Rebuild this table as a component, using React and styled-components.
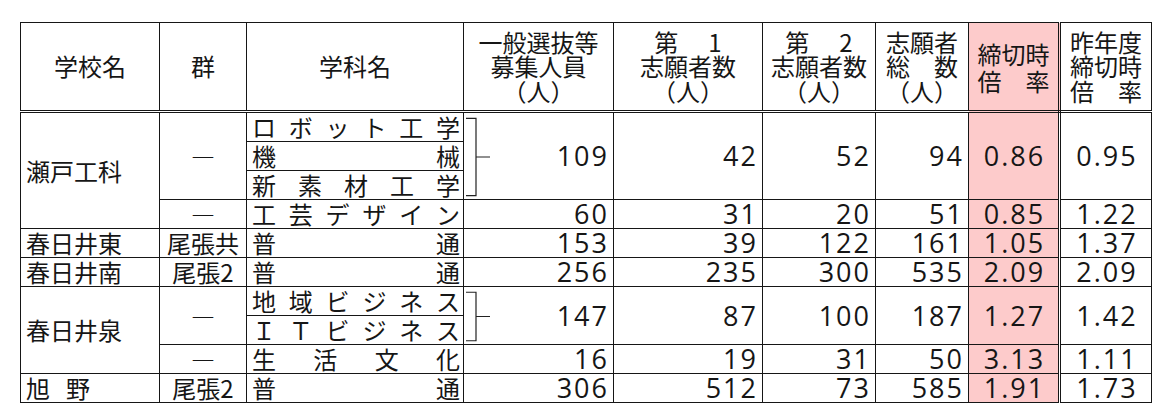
import React from 'react';
import styled, { createGlobalStyle, css } from 'styled-components';

const INK = '#161616';
const PINK = '#fdcbcb';
const CJK = '"Noto Sans CJK JP", "Noto Sans CJK SC", sans-serif';
const LATIN = '"Open Sans", "Noto Sans", sans-serif';

const GlobalStyle = createGlobalStyle`
  html, body {
    margin: 0;
    background: #fff;
  }
  body {
    font-family: ${CJK};
    color: ${INK};
  }
`;

const WIDTHS = [139, 87, 217, 150, 149, 113, 93, 91, 92];

const Page = styled.div`
  padding: 22px 0 0 20px;
`;

const Table = styled.table`
  border-collapse: collapse;
  table-layout: fixed;
  width: 1131px;
`;

const cellBase = css`
  border: 1px solid ${INK};
  padding: 0;
  vertical-align: middle;
  white-space: nowrap;
  ${(p) => p.$pink && `background: ${PINK};`}
  ${(p) => p.$double && `border-right: 3px double ${INK};`}
`;

const HeadCell = styled.th`
  ${cellBase};
  height: 87px;
  border-bottom: 3px double ${INK};
  font-family: ${CJK};
  font-weight: 400;
  font-size: 24px;
  line-height: ${(p) => (p.$loose ? 27 : 24.5)}px;
  text-align: center;
`;

// blank space between two glyphs of a label (第　1, 旭　野)
const Gap = styled.span`
  display: inline-block;
  width: ${(p) => p.$w || 30}px;
`;

const BodyCell = styled.td`
  ${cellBase};
  height: 28px;
  font-size: 24px;
  line-height: 28px;
`;

const NameCell = styled(BodyCell)`
  padding-left: 5px;
  text-align: left;
`;

const GroupCell = styled(BodyCell)`
  text-align: center;
`;

const CourseCell = styled(BodyCell)`
  padding: 0 3px 0 5px;
`;

const Spread = styled.div`
  display: flex;
  justify-content: space-between;
`;

const NumCell = styled(BodyCell)`
  position: relative;
  padding-right: 4px;
  text-align: right;
  font-family: ${LATIN};
  font-size: 27px;
  letter-spacing: 2px;
`;

const RateCell = styled(NumCell)`
  padding: 0 0 0 2px;
  text-align: center;
`;

const BracketMark = styled.svg`
  position: absolute;
  left: 1px;
  top: 5px;
  width: 26px;
  height: calc(100% - 8px);
  overflow: visible;
`;

function Bracket() {
  return (
    <BracketMark viewBox="0 0 26 100" preserveAspectRatio="none">
      <path
        d="M1 0.5 H11 V99.5 H1 M11 50 H25"
        fill="none"
        stroke="#222"
        strokeWidth="1.2"
        vectorEffect="non-scaling-stroke"
      />
    </BracketMark>
  );
}

function Course({ name }) {
  return (
    <CourseCell>
      <Spread>
        {[...name].map((ch, i) => (
          <span key={i}>{ch}</span>
        ))}
      </Spread>
    </CourseCell>
  );
}

function Figures({ values, span, bracket }) {
  const [quota, first, second, total, rate, prev] = values;
  return (
    <>
      <NumCell rowSpan={span}>
        {bracket && <Bracket />}
        {quota}
      </NumCell>
      <NumCell rowSpan={span}>{first}</NumCell>
      <NumCell rowSpan={span}>{second}</NumCell>
      <NumCell rowSpan={span}>{total}</NumCell>
      <RateCell rowSpan={span} $pink $double>
        {rate}
      </RateCell>
      <RateCell rowSpan={span}>{prev}</RateCell>
    </>
  );
}

const DASH = '―';

export default function App() {
  return (
    <Page>
      <GlobalStyle />
      <Table>
        <colgroup>
          {WIDTHS.map((w, i) => (
            <col key={i} style={{ width: w }} />
          ))}
        </colgroup>
        <thead>
          <tr>
            <HeadCell>学校名</HeadCell>
            <HeadCell>群</HeadCell>
            <HeadCell>学科名</HeadCell>
            <HeadCell>
              一般選抜等
              <br />
              募集人員
              <br />
              （人）
            </HeadCell>
            <HeadCell>
              第<Gap />1
              <br />
              志願者数
              <br />
              （人）
            </HeadCell>
            <HeadCell>
              第<Gap />2
              <br />
              志願者数
              <br />
              （人）
            </HeadCell>
            <HeadCell>
              志願者
              <br />
              総　数
              <br />
              （人）
            </HeadCell>
            <HeadCell $pink $double $loose>
              締切時
              <br />
              倍　率
            </HeadCell>
            <HeadCell>
              昨年度
              <br />
              締切時
              <br />
              倍　率
            </HeadCell>
          </tr>
        </thead>
        <tbody>
          <tr>
            <NameCell rowSpan={4}>瀬戸工科</NameCell>
            <GroupCell rowSpan={3}>{DASH}</GroupCell>
            <Course name="ロボット工学" />
            <Figures span={3} bracket values={['109', '42', '52', '94', '0.86', '0.95']} />
          </tr>
          <tr>
            <Course name="機械" />
          </tr>
          <tr>
            <Course name="新素材工学" />
          </tr>
          <tr>
            <GroupCell>{DASH}</GroupCell>
            <Course name="工芸デザイン" />
            <Figures values={['60', '31', '20', '51', '0.85', '1.22']} />
          </tr>
          <tr>
            <NameCell>春日井東</NameCell>
            <GroupCell>尾張共</GroupCell>
            <Course name="普通" />
            <Figures values={['153', '39', '122', '161', '1.05', '1.37']} />
          </tr>
          <tr>
            <NameCell>春日井南</NameCell>
            <GroupCell>尾張2</GroupCell>
            <Course name="普通" />
            <Figures values={['256', '235', '300', '535', '2.09', '2.09']} />
          </tr>
          <tr>
            <NameCell rowSpan={3}>春日井泉</NameCell>
            <GroupCell rowSpan={2}>{DASH}</GroupCell>
            <Course name="地域ビジネス" />
            <Figures span={2} bracket values={['147', '87', '100', '187', '1.27', '1.42']} />
          </tr>
          <tr>
            <Course name="ＩＴビジネス" />
          </tr>
          <tr>
            <GroupCell>{DASH}</GroupCell>
            <Course name="生活文化" />
            <Figures values={['16', '19', '31', '50', '3.13', '1.11']} />
          </tr>
          <tr>
            <NameCell>
              旭<Gap $w={16} />野
            </NameCell>
            <GroupCell>尾張2</GroupCell>
            <Course name="普通" />
            <Figures values={['306', '512', '73', '585', '1.91', '1.73']} />
          </tr>
        </tbody>
      </Table>
    </Page>
  );
}
